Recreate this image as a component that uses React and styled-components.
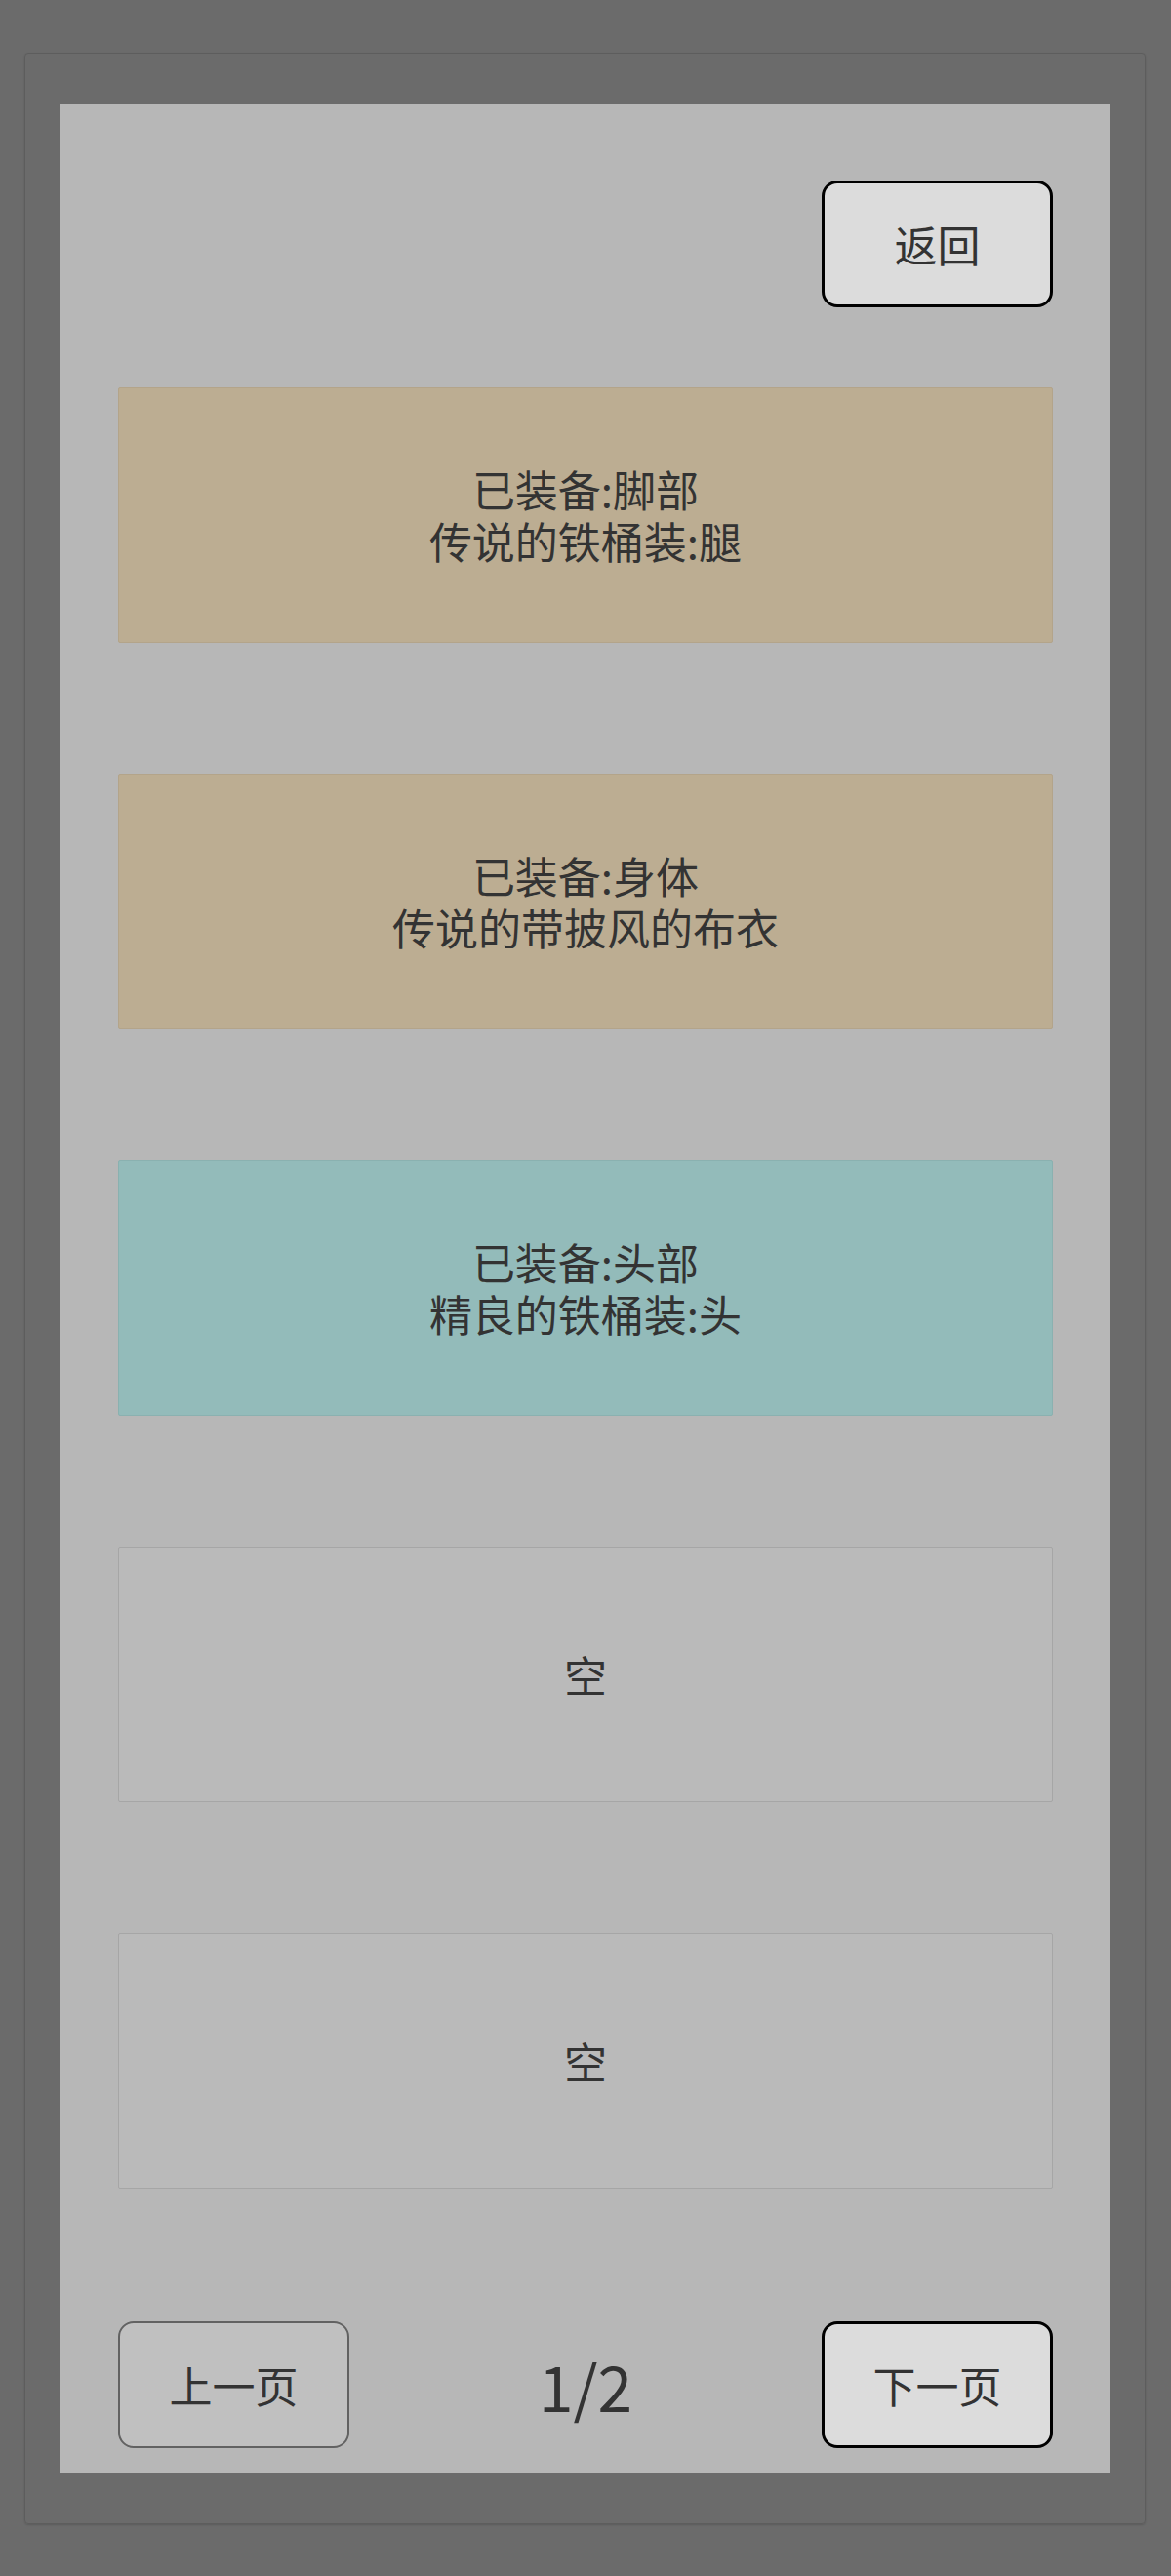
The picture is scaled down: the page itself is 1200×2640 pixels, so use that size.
import styled, { createGlobalStyle } from "styled-components";

const GlobalStyle = createGlobalStyle`
    html, body {
        margin: 0;
        padding: 0;
        background: #6b6b6b;
    }
    body {
        font-family: "Noto Sans CJK SC", "Noto Sans", sans-serif;
        color: #333;
    }
    * {
        box-sizing: border-box;
    }
`;

const Page = styled.div`
    padding: 54px 26px 55px 25px;
`;

const Frame = styled.div`
    border: 1px solid #5d5d5d;
    border-radius: 4px;
    padding: 52px 35px 52px 35px;
    box-shadow: 0 1px 2px rgba(0, 0, 0, 0.15);
`;

const Panel = styled.div`
    background: #b7b7b7;
    padding: 78px 59px 25px 60px;
    display: flex;
    flex-direction: column;
`;

const Header = styled.div`
    display: flex;
    justify-content: flex-end;
`;

const Button = styled.button`
    width: 237px;
    height: 130px;
    font-family: inherit;
    font-size: 44px;
    color: #333;
    border-radius: 16px;
    cursor: pointer;
    background: ${(p) => (p.$disabled ? "#c0c0c0" : "#dcdcdc")};
    border: ${(p) => (p.$disabled ? "2px solid #626262" : "3px solid #000")};
    padding: 0;
`;

const SlotList = styled.div`
    display: flex;
    flex-direction: column;
    gap: 134px;
    margin-top: 82px;
`;

const colors = {
    legend: { bg: "#bcad92", border: "#b3a48a" },
    fine: { bg: "#93bbba", border: "#8ab1b0" },
    empty: { bg: "#bababa", border: "#a6a6a6" },
};

const Slot = styled.div`
    height: 262px;
    display: flex;
    flex-direction: column;
    align-items: center;
    justify-content: center;
    background: ${(p) => colors[p.$kind].bg};
    border: 1px solid ${(p) => colors[p.$kind].border};
    border-radius: 2px;
    font-size: 44px;
    line-height: 53px;
    color: #333;
`;

const Pager = styled.div`
    display: flex;
    justify-content: space-between;
    align-items: center;
    margin-top: 136px;
`;

const PageNum = styled.div`
    font-size: 64px;
    color: #333;
`;

const slots = [
    { kind: "legend", lines: ["已装备:脚部", "传说的铁桶装:腿"] },
    { kind: "legend", lines: ["已装备:身体", "传说的带披风的布衣"] },
    { kind: "fine", lines: ["已装备:头部", "精良的铁桶装:头"] },
    { kind: "empty", lines: ["空"] },
    { kind: "empty", lines: ["空"] },
];

export default function App() {
    return (
        <>
            <GlobalStyle />
            <Page>
                <Frame>
                    <Panel>
                        <Header>
                            <Button>返回</Button>
                        </Header>
                        <SlotList>
                            {slots.map((s, i) => (
                                <Slot key={i} $kind={s.kind}>
                                    {s.lines.map((l) => (
                                        <div key={l}>{l}</div>
                                    ))}
                                </Slot>
                            ))}
                        </SlotList>
                        <Pager>
                            <Button $disabled>上一页</Button>
                            <PageNum>1/2</PageNum>
                            <Button>下一页</Button>
                        </Pager>
                    </Panel>
                </Frame>
            </Page>
        </>
    );
}
